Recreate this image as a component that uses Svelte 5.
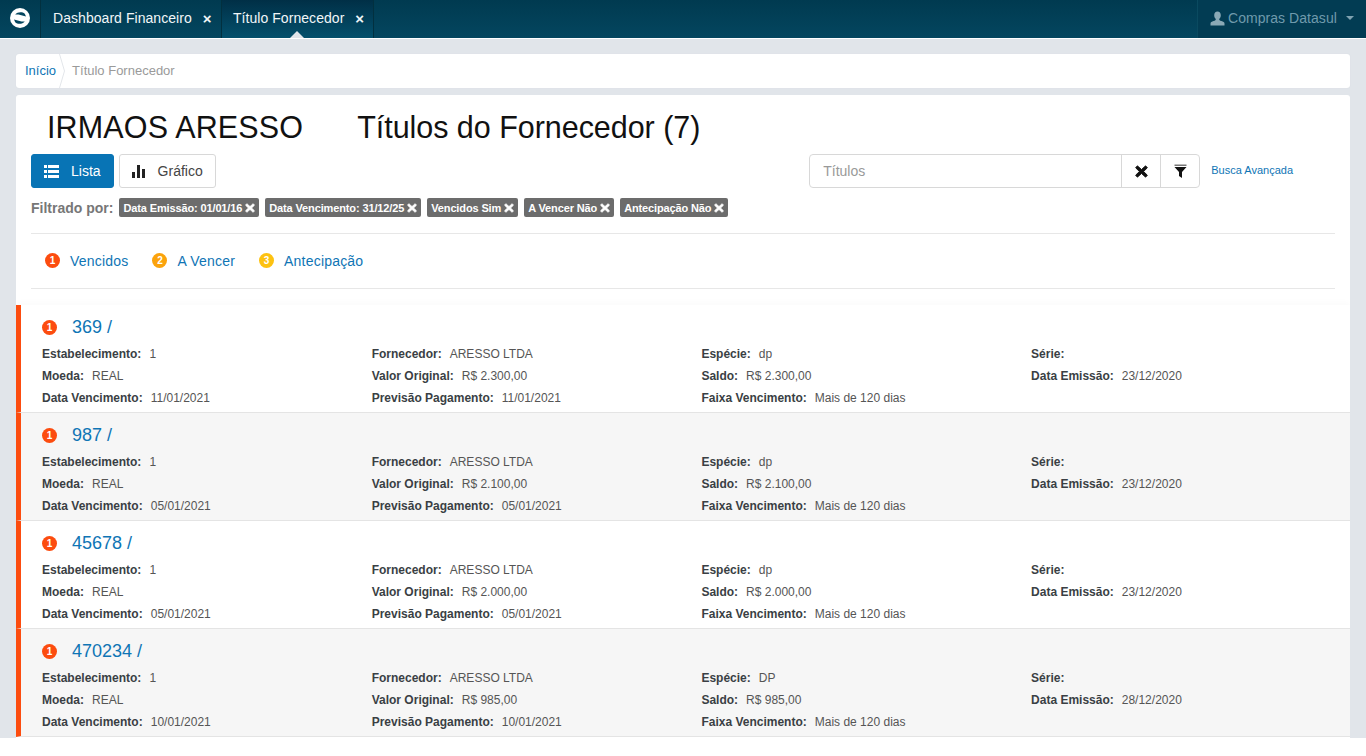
<script>
  const filters = [
    'Data Emissão: 01/01/16',
    'Data Vencimento: 31/12/25',
    'Vencidos Sim',
    'A Vencer Não',
    'Antecipação Não'
  ]

  const legend = [
    { n: 1, label: 'Vencidos', color: '#fc4c0f' },
    { n: 2, label: 'A Vencer', color: '#fba30c' },
    { n: 3, label: 'Antecipação', color: '#fdc211' }
  ]

  const titulos = [
    { id: '369', forn: 'ARESSO LTDA', esp: 'dp', valor: 'R$ 2.300,00', emissao: '23/12/2020', venc: '11/01/2021' },
    { id: '987', forn: 'ARESSO LTDA', esp: 'dp', valor: 'R$ 2.100,00', emissao: '23/12/2020', venc: '05/01/2021' },
    { id: '45678', forn: 'ARESSO LTDA', esp: 'dp', valor: 'R$ 2.000,00', emissao: '23/12/2020', venc: '05/01/2021' },
    { id: '470234', forn: 'ARESSO LTDA', esp: 'DP', valor: 'R$ 985,00', emissao: '28/12/2020', venc: '10/01/2021' }
  ]

  function fields(t) {
    return [
      ['Estabelecimento:', '1'], ['Fornecedor:', t.forn], ['Espécie:', t.esp], ['Série:', ''],
      ['Moeda:', 'REAL'], ['Valor Original:', t.valor], ['Saldo:', t.valor], ['Data Emissão:', t.emissao],
      ['Data Vencimento:', t.venc], ['Previsão Pagamento:', t.venc], ['Faixa Vencimento:', 'Mais de 120 dias']
    ]
  }
</script>

{#snippet cross(size)}
  <svg class="cross" width={size} height={size} viewBox="0 0 12 12" aria-hidden="true">
    <path d="M2.2 0.8 6 4.2 9.8 0.8 11.4 2.6 7.9 6 11.4 9.4 9.8 11.2 6 7.8 2.2 11.2 0.6 9.4 4.1 6 0.6 2.6Z" fill="currentColor" stroke="currentColor" stroke-width="0.9" stroke-linejoin="round" />
  </svg>
{/snippet}

<div class="page">
  <nav class="navbar">
    <a class="brand" href="#top" aria-label="Início">
      <svg width="22" height="22" viewBox="0 0 22 22" aria-hidden="true">
        <circle cx="11" cy="11" r="10" fill="#fff" />
        <path d="M6.2 7.6C8.4 5 13 4.4 15.8 6.8L17 9.6 9.5 7.4Z" fill="#04465f" />
        <path d="M15.8 14.4C13.6 17 9 17.6 6.2 15.2L5 12.4 12.5 14.6Z" fill="#04465f" />
      </svg>
    </a>
    <div class="tab">
      <span>Dashboard Financeiro</span><span class="tab-x">×</span>
    </div>
    <div class="tab active">
      <span>Título Fornecedor</span><span class="tab-x">×</span>
    </div>
    <div class="user">
      <svg width="15" height="15" viewBox="0 0 15 15" aria-hidden="true">
        <path d="M7.5 0.5C5.4 0.5 4.2 2 4.2 4.2 4.2 5.8 4.9 7.2 5.8 8 5.8 9 5.3 9.5 3.6 10.1 1.7 10.8 0.6 11.4 0.5 12.4V14.5H14.5V12.4C14.4 11.4 13.3 10.8 11.4 10.1 9.7 9.5 9.2 9 9.2 8 10.1 7.2 10.8 5.8 10.8 4.2 10.8 2 9.6 0.5 7.5 0.5Z" fill="#8aa9b6" />
      </svg>
      <span>Compras Datasul</span>
      <i class="caret"></i>
    </div>
  </nav>

  <div class="breadcrumb">
    <a href="#top">Início</a>
    <svg width="7" height="34" viewBox="0 0 7 34" aria-hidden="true">
      <path d="M0.5 0 5.5 17 0.5 34" fill="none" stroke="#e3e6ea" />
    </svg>
    <span>Título Fornecedor</span>
  </div>

  <main class="panel">
    <header class="heading">
      <h1 class="supplier">IRMAOS ARESSO</h1>
      <h1>Títulos do Fornecedor (7)</h1>
    </header>

    <div class="toolbar">
      <div class="views">
        <button class="btn primary">
          <svg width="15" height="13" viewBox="0 0 15 13" aria-hidden="true">
            <path d="M0 0h3v3H0zM4 0h11v3H4zM0 5h3v3H0zM4 5h11v3H4zM0 10h3v3H0zM4 10h11v3H4z" fill="#fff" />
          </svg>
          Lista
        </button>
        <button class="btn">
          <svg width="14" height="13" viewBox="0 0 14 13" aria-hidden="true">
            <path d="M0 7h3v6H0zM5 0h3v13H5zM10 4h3v9h-3z" fill="#222" />
          </svg>
          Gráfico
        </button>
      </div>
      <div class="search">
        <div class="search-group">
          <input placeholder="Títulos" />
          <button aria-label="Limpar">{@render cross(13)}</button>
          <button aria-label="Filtrar">
            <svg width="13" height="14" viewBox="0 0 13 14" aria-hidden="true">
              <path d="M0.5 0.5h12v1.4H0.5z" fill="#777" />
              <path d="M0.5 3h12L8 8v6l-3-2V8Z" fill="#111" />
            </svg>
          </button>
        </div>
        <a class="advanced" href="#top">Busca Avançada</a>
      </div>
    </div>

    <div class="filters">
      <strong>Filtrado por:</strong>
      {#each filters as f}
        <span class="tag">{f} {@render cross(10)}</span>
      {/each}
    </div>

    <div class="legend">
      {#each legend as l}
        <a href="#top"><span class="dot" style="background: {l.color}">{l.n}</span>{l.label}</a>
      {/each}
    </div>

    <div class="list">
      {#each titulos as t}
        <article class="item">
          <div class="item-title">
            <span class="dot">1</span>
            <a href="#top">{t.id} /</a>
          </div>
          <div class="item-grid">
            {#each fields(t) as [label, value]}
              <div class="field"><b>{label}</b><span>{value}</span></div>
            {/each}
          </div>
        </article>
      {/each}
    </div>
  </main>
</div>

<style>
  :global(body) {
    background: #fff;
    font-family: "Liberation Sans", Arial, sans-serif;
  }

  .page {
    height: 756px;
    overflow: hidden;
    background: linear-gradient(#e1e5ea 738px, #fff 738px);
  }

  a {
    color: #0f75b5;
    text-decoration: none;
  }

  .navbar {
    height: 38px;
    display: flex;
    background: linear-gradient(#003a50, #04465f);
    border-bottom: 1px solid #fff;
    color: #fff;
    font-size: 14px;
    letter-spacing: 0.05px;
  }

  .brand {
    width: 41px;
    display: flex;
    align-items: center;
    justify-content: center;
    border-right: 1px solid #02303f;
    padding-bottom: 2px;
    box-sizing: border-box;
  }

  .tab {
    display: flex;
    align-items: center;
    gap: 11px;
    padding: 0 0 2px 12px;
    width: 181px;
    box-sizing: border-box;
    border-right: 1px solid #02303f;
    position: relative;
    color: #f1f6f8;
  }

  .tab.active {
    width: 152px;
    padding-left: 11px;
    background: linear-gradient(#002f46, #04506c);
  }

  .tab.active::after {
    content: '';
    position: absolute;
    left: 68px;
    bottom: 0;
    border: 7px solid transparent;
    border-top: 0;
    border-bottom-color: #e1e5ea;
  }

  .tab-x {
    font-size: 15px;
    font-weight: bold;
    line-height: 1;
  }

  .user {
    margin-left: auto;
    width: 169px;
    box-sizing: border-box;
    display: flex;
    align-items: center;
    gap: 3px;
    padding: 0 0 2px 12px;
    border-left: 1px solid #0a4a60;
    background: #023c53;
    color: #6f9aac;
  }

  .caret {
    margin-left: 6px;
    border: 4px solid transparent;
    border-bottom: 0;
    border-top-color: #7fa2b1;
  }

  .breadcrumb {
    margin: 15px 16px 0;
    height: 34px;
    background: #fff;
    border-radius: 3px;
    display: flex;
    align-items: center;
    font-size: 13px;
    line-height: 15px;
    padding-left: 9px;
    color: #9a9a9a;
    box-shadow: 0 0 1px #cfd4da;
  }

  .breadcrumb a,
  .breadcrumb span {
    margin-top: -2px;
  }

  .breadcrumb svg {
    margin: 0 6px 0 3px;
  }

  .panel {
    margin: 7px 16px 0;
    height: 643px;
    background: #fff;
    border-radius: 3px 3px 0 0;
    overflow: hidden;
  }

  .heading {
    display: flex;
    gap: 54px;
    padding: 14px 0 0 31px;
  }

  h1 {
    margin: 0;
    font-size: 30.5px;
    font-weight: normal;
    line-height: 36px;
    color: #111;
    letter-spacing: -0.04px;
  }

  h1.supplier {
    letter-spacing: 0.15px;
  }

  .toolbar {
    display: flex;
    justify-content: space-between;
    margin-top: 9px;
    padding: 0 57px 0 15px;
  }

  .views {
    display: flex;
    gap: 5px;
  }

  .btn {
    height: 34px;
    padding: 0 12px;
    display: flex;
    align-items: center;
    gap: 12px;
    font: 14px "Liberation Sans", Arial, sans-serif;
    color: #444;
    background: #fff;
    border: 1px solid #d8d8d8;
    border-radius: 3px;
  }

  .btn.primary {
    background: #0874b5;
    border-color: #0874b5;
    color: #fff;
  }

  .search {
    display: flex;
    align-items: center;
    gap: 11px;
  }

  .search-group {
    display: flex;
    width: 391px;
    height: 34px;
    box-sizing: border-box;
    border: 1px solid #d8d8d8;
    border-radius: 4px;
  }

  .search-group input {
    flex: 1;
    min-width: 0;
    border: 0;
    background: none;
    padding: 0 13px;
    font: 14px "Liberation Sans", Arial, sans-serif;
  }

  .search-group input::placeholder {
    color: #999;
  }

  .search-group button {
    width: 39px;
    display: flex;
    align-items: center;
    justify-content: center;
    border: 0;
    border-left: 1px solid #d8d8d8;
    background: none;
    padding: 0;
    color: #111;
  }

  .advanced {
    font-size: 11px;
    margin-top: -2px;
  }

  .filters {
    display: flex;
    align-items: center;
    gap: 6px;
    margin-top: 9px;
    padding-left: 15px;
    font-size: 14px;
    color: #777;
    height: 21px;
  }

  .tag {
    height: 19px;
    display: flex;
    align-items: center;
    gap: 3px;
    padding: 0 4px;
    background: #6c6c6c;
    border-radius: 2px;
    color: #fff;
    font-size: 11px;
    font-weight: bold;
    letter-spacing: -0.13px;
  }

  .legend {
    margin: 15px 15px 0;
    height: 54px;
    border-top: 1px solid #e7e7e7;
    border-bottom: 1px solid #e7e7e7;
    display: flex;
    align-items: center;
    gap: 24px;
    padding-left: 14px;
    font-size: 14px;
    letter-spacing: 0.2px;
  }

  .legend a {
    display: flex;
    align-items: center;
    gap: 10px;
    margin-top: -1px;
  }

  .dot {
    width: 15px;
    height: 15px;
    border-radius: 50%;
    display: inline-flex;
    align-items: center;
    justify-content: center;
    background: #fc4c0f;
    color: #fff;
    font-size: 10px;
    font-weight: bold;
    flex: none;
    letter-spacing: 0;
  }

  .list {
    margin-top: 16px;
    box-shadow: 0 -3px 6px rgba(0, 0, 0, 0.02);
  }

  .item {
    height: 108px;
    box-sizing: border-box;
    border-left: 5px solid #fc4c0f;
    border-bottom: 1px solid #e4e4e4;
    padding: 11px 0 0 21px;
  }

  .item:nth-child(even) {
    background: #f6f6f6;
  }

  .item-title {
    display: flex;
    align-items: center;
    gap: 15px;
    height: 23px;
  }

  .item-title a {
    font-size: 18px;
  }

  .item-grid {
    display: grid;
    grid-template-columns: repeat(4, 329.7px);
    grid-auto-rows: 22px;
    margin-top: 4px;
    font-size: 12px;
    color: #555;
  }

  .field {
    display: flex;
    align-items: center;
    gap: 8px;
  }

  .field b {
    color: #3a3f44;
  }
</style>
